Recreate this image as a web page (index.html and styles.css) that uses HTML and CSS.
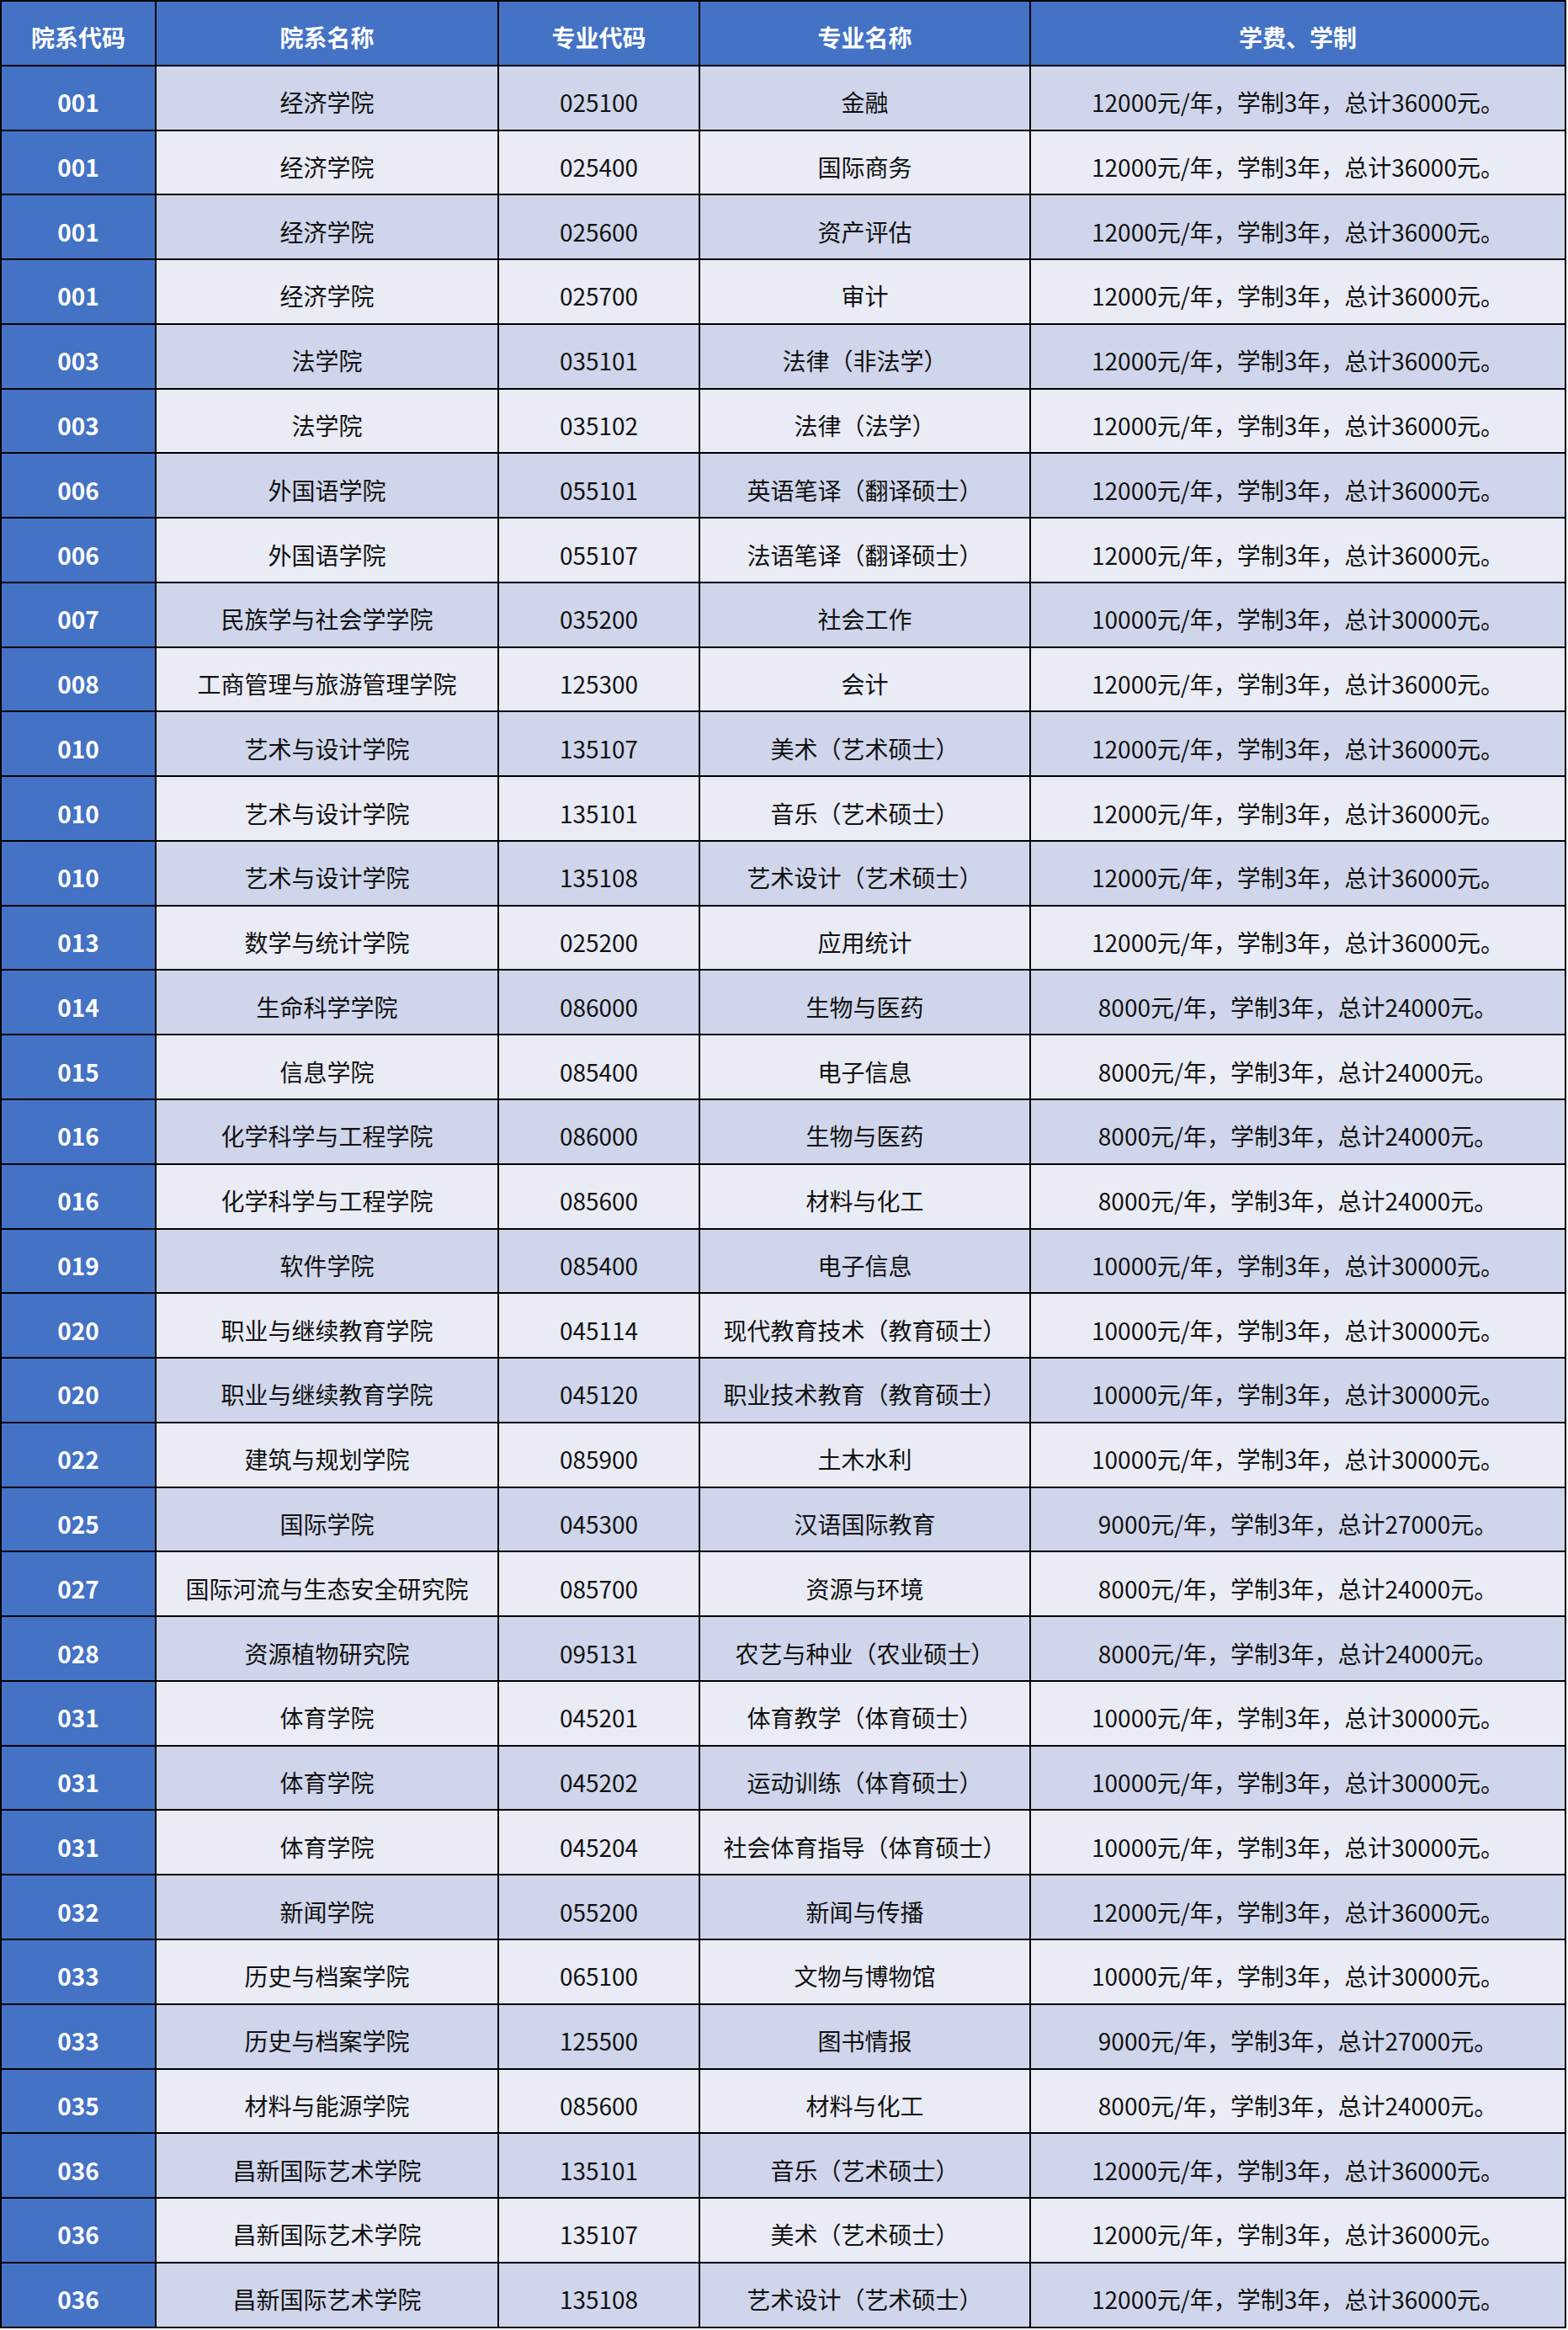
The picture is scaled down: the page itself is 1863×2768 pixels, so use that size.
FILE: index.html
```html
<!DOCTYPE html>
<html lang="zh-CN">
<head>
<meta charset="utf-8">
<title>学费、学制</title>
<link rel="stylesheet" href="styles.css">
</head>
<body>
<div class="sheet">
  <div class="row head"><div class="c">院系代码</div><div class="c">院系名称</div><div class="c">专业代码</div><div class="c">专业名称</div><div class="c">学费、学制</div></div>
  <div class="row"><div class="c code">001</div><div class="c">经济学院</div><div class="c">025100</div><div class="c">金融</div><div class="c">12000元/年，学制3年，总计36000元。</div></div>
  <div class="row"><div class="c code">001</div><div class="c">经济学院</div><div class="c">025400</div><div class="c">国际商务</div><div class="c">12000元/年，学制3年，总计36000元。</div></div>
  <div class="row"><div class="c code">001</div><div class="c">经济学院</div><div class="c">025600</div><div class="c">资产评估</div><div class="c">12000元/年，学制3年，总计36000元。</div></div>
  <div class="row"><div class="c code">001</div><div class="c">经济学院</div><div class="c">025700</div><div class="c">审计</div><div class="c">12000元/年，学制3年，总计36000元。</div></div>
  <div class="row"><div class="c code">003</div><div class="c">法学院</div><div class="c">035101</div><div class="c">法律（非法学）</div><div class="c">12000元/年，学制3年，总计36000元。</div></div>
  <div class="row"><div class="c code">003</div><div class="c">法学院</div><div class="c">035102</div><div class="c">法律（法学）</div><div class="c">12000元/年，学制3年，总计36000元。</div></div>
  <div class="row"><div class="c code">006</div><div class="c">外国语学院</div><div class="c">055101</div><div class="c">英语笔译（翻译硕士）</div><div class="c">12000元/年，学制3年，总计36000元。</div></div>
  <div class="row"><div class="c code">006</div><div class="c">外国语学院</div><div class="c">055107</div><div class="c">法语笔译（翻译硕士）</div><div class="c">12000元/年，学制3年，总计36000元。</div></div>
  <div class="row"><div class="c code">007</div><div class="c">民族学与社会学学院</div><div class="c">035200</div><div class="c">社会工作</div><div class="c">10000元/年，学制3年，总计30000元。</div></div>
  <div class="row"><div class="c code">008</div><div class="c">工商管理与旅游管理学院</div><div class="c">125300</div><div class="c">会计</div><div class="c">12000元/年，学制3年，总计36000元。</div></div>
  <div class="row"><div class="c code">010</div><div class="c">艺术与设计学院</div><div class="c">135107</div><div class="c">美术（艺术硕士）</div><div class="c">12000元/年，学制3年，总计36000元。</div></div>
  <div class="row"><div class="c code">010</div><div class="c">艺术与设计学院</div><div class="c">135101</div><div class="c">音乐（艺术硕士）</div><div class="c">12000元/年，学制3年，总计36000元。</div></div>
  <div class="row"><div class="c code">010</div><div class="c">艺术与设计学院</div><div class="c">135108</div><div class="c">艺术设计（艺术硕士）</div><div class="c">12000元/年，学制3年，总计36000元。</div></div>
  <div class="row"><div class="c code">013</div><div class="c">数学与统计学院</div><div class="c">025200</div><div class="c">应用统计</div><div class="c">12000元/年，学制3年，总计36000元。</div></div>
  <div class="row"><div class="c code">014</div><div class="c">生命科学学院</div><div class="c">086000</div><div class="c">生物与医药</div><div class="c">8000元/年，学制3年，总计24000元。</div></div>
  <div class="row"><div class="c code">015</div><div class="c">信息学院</div><div class="c">085400</div><div class="c">电子信息</div><div class="c">8000元/年，学制3年，总计24000元。</div></div>
  <div class="row"><div class="c code">016</div><div class="c">化学科学与工程学院</div><div class="c">086000</div><div class="c">生物与医药</div><div class="c">8000元/年，学制3年，总计24000元。</div></div>
  <div class="row"><div class="c code">016</div><div class="c">化学科学与工程学院</div><div class="c">085600</div><div class="c">材料与化工</div><div class="c">8000元/年，学制3年，总计24000元。</div></div>
  <div class="row"><div class="c code">019</div><div class="c">软件学院</div><div class="c">085400</div><div class="c">电子信息</div><div class="c">10000元/年，学制3年，总计30000元。</div></div>
  <div class="row"><div class="c code">020</div><div class="c">职业与继续教育学院</div><div class="c">045114</div><div class="c">现代教育技术（教育硕士）</div><div class="c">10000元/年，学制3年，总计30000元。</div></div>
  <div class="row"><div class="c code">020</div><div class="c">职业与继续教育学院</div><div class="c">045120</div><div class="c">职业技术教育（教育硕士）</div><div class="c">10000元/年，学制3年，总计30000元。</div></div>
  <div class="row"><div class="c code">022</div><div class="c">建筑与规划学院</div><div class="c">085900</div><div class="c">土木水利</div><div class="c">10000元/年，学制3年，总计30000元。</div></div>
  <div class="row"><div class="c code">025</div><div class="c">国际学院</div><div class="c">045300</div><div class="c">汉语国际教育</div><div class="c">9000元/年，学制3年，总计27000元。</div></div>
  <div class="row"><div class="c code">027</div><div class="c">国际河流与生态安全研究院</div><div class="c">085700</div><div class="c">资源与环境</div><div class="c">8000元/年，学制3年，总计24000元。</div></div>
  <div class="row"><div class="c code">028</div><div class="c">资源植物研究院</div><div class="c">095131</div><div class="c">农艺与种业（农业硕士）</div><div class="c">8000元/年，学制3年，总计24000元。</div></div>
  <div class="row"><div class="c code">031</div><div class="c">体育学院</div><div class="c">045201</div><div class="c">体育教学（体育硕士）</div><div class="c">10000元/年，学制3年，总计30000元。</div></div>
  <div class="row"><div class="c code">031</div><div class="c">体育学院</div><div class="c">045202</div><div class="c">运动训练（体育硕士）</div><div class="c">10000元/年，学制3年，总计30000元。</div></div>
  <div class="row"><div class="c code">031</div><div class="c">体育学院</div><div class="c">045204</div><div class="c">社会体育指导（体育硕士）</div><div class="c">10000元/年，学制3年，总计30000元。</div></div>
  <div class="row"><div class="c code">032</div><div class="c">新闻学院</div><div class="c">055200</div><div class="c">新闻与传播</div><div class="c">12000元/年，学制3年，总计36000元。</div></div>
  <div class="row"><div class="c code">033</div><div class="c">历史与档案学院</div><div class="c">065100</div><div class="c">文物与博物馆</div><div class="c">10000元/年，学制3年，总计30000元。</div></div>
  <div class="row"><div class="c code">033</div><div class="c">历史与档案学院</div><div class="c">125500</div><div class="c">图书情报</div><div class="c">9000元/年，学制3年，总计27000元。</div></div>
  <div class="row"><div class="c code">035</div><div class="c">材料与能源学院</div><div class="c">085600</div><div class="c">材料与化工</div><div class="c">8000元/年，学制3年，总计24000元。</div></div>
  <div class="row"><div class="c code">036</div><div class="c">昌新国际艺术学院</div><div class="c">135101</div><div class="c">音乐（艺术硕士）</div><div class="c">12000元/年，学制3年，总计36000元。</div></div>
  <div class="row"><div class="c code">036</div><div class="c">昌新国际艺术学院</div><div class="c">135107</div><div class="c">美术（艺术硕士）</div><div class="c">12000元/年，学制3年，总计36000元。</div></div>
  <div class="row"><div class="c code">036</div><div class="c">昌新国际艺术学院</div><div class="c">135108</div><div class="c">艺术设计（艺术硕士）</div><div class="c">12000元/年，学制3年，总计36000元。</div></div>
</div>
</body>
</html>
```
FILE: styles.css
```css
html, body {
  margin: 0;
  padding: 0;
  background: #ffffff;
}
.sheet {
  display: grid;
  grid-template-columns: 182px 405px 237px 391px 634px;
  grid-template-rows: repeat(36, 74.78px);
  gap: 2px;
  padding: 2px;
  width: fit-content;
  background: #000000;
  font-family: "Noto Sans CJK SC", "Liberation Sans", sans-serif;
  font-size: 28px;
  color: #111111;
}
.row {
  display: contents;
}
.c {
  display: flex;
  align-items: center;
  justify-content: center;
  padding-top: 10px;
  box-sizing: border-box;
  white-space: nowrap;
  background: #e9ebf5;
}
.row:nth-child(even) .c {
  background: #cfd5ea;
}
.head .c,
.row .c.code {
  background: #4472c4;
  color: #ffffff;
  font-weight: bold;
}
```
